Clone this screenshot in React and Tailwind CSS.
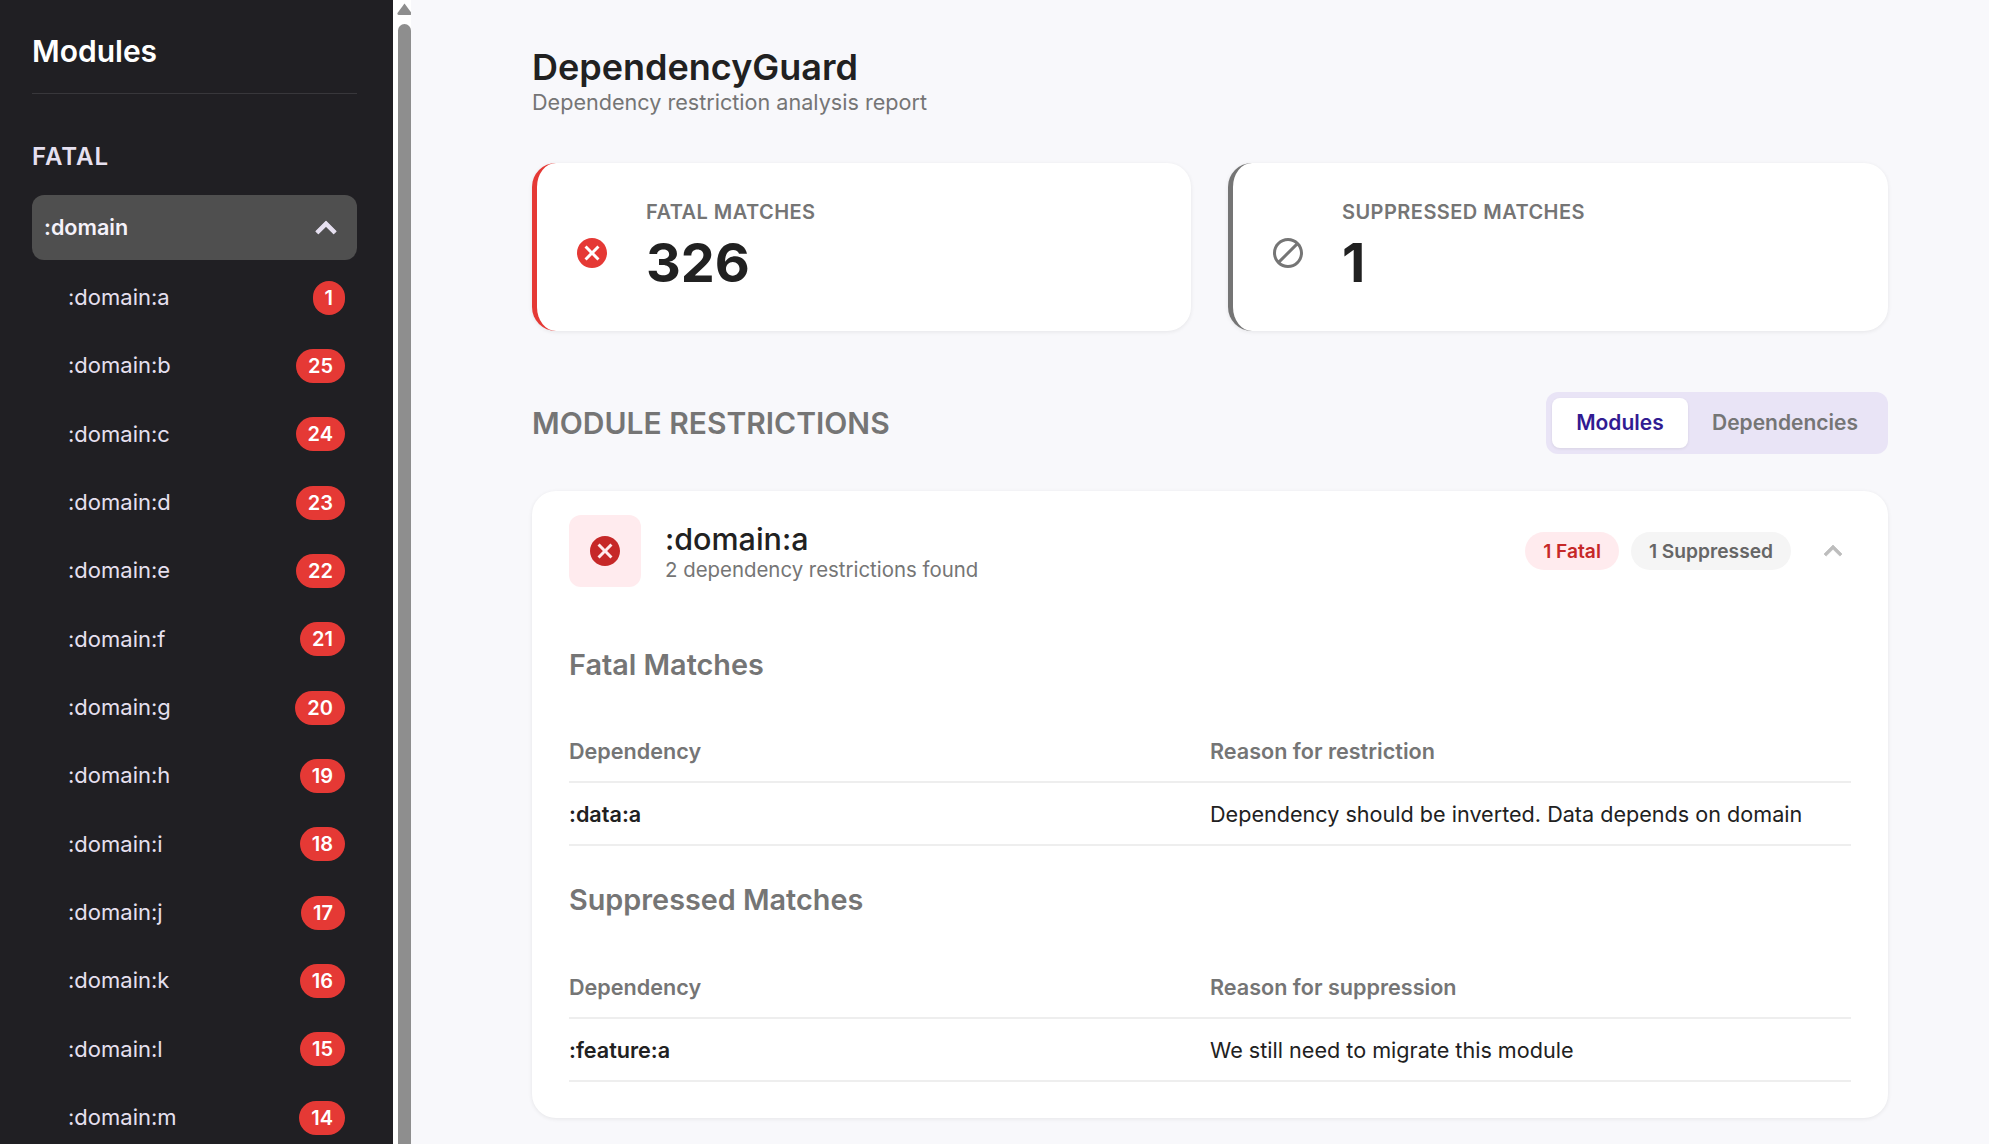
const cancel = "M12 2C6.47 2 2 6.47 2 12s4.47 10 10 10 10-4.47 10-10S17.53 2 12 2zm5 13.59L15.59 17 12 13.41 8.41 17 7 15.59 10.59 12 7 8.41 8.41 7 12 10.59 15.59 7 17 8.41 13.41 12 17 15.59z";
const block = "M12 2C6.48 2 2 6.48 2 12s4.48 10 10 10 10-4.48 10-10S17.52 2 12 2zM4 12c0-4.42 3.58-8 8-8 1.85 0 3.55.63 4.9 1.69L5.69 16.9C4.63 15.55 4 13.85 4 12zm8 8c-1.85 0-3.55-.63-4.9-1.69L18.31 7.1C19.37 8.45 20 10.15 20 12c0 4.42-3.58 8-8 8z";
const expandLess = "M12 8l-6 6 1.41 1.41L12 10.83l4.59 4.58L18 14z";

function Icon({ d, className, thick }) {
  return (
    <svg viewBox="0 0 24 24" className={className} fill="currentColor" stroke={thick ? "currentColor" : "none"} strokeWidth={thick || 0} strokeLinejoin="round">
      <path d={d} />
    </svg>
  );
}

const items = [
  ["a", 1], ["b", 25], ["c", 24], ["d", 23], ["e", 22], ["f", 21], ["g", 20],
  ["h", 19], ["i", 18], ["j", 17], ["k", 16], ["l", 15], ["m", 14],
];

function Sidebar() {
  return (
    <aside className="w-[393px] shrink-0 h-full overflow-hidden bg-[#201f23] pl-8 pr-9 pt-[32px]">
      <h2 className="text-[30px] leading-[38px] font-semibold text-white pb-[23px] border-b border-[#38373b]">Modules</h2>
      <h3 className="mt-[48px] text-[24px] leading-[30px] font-semibold text-[#e6e0f0] tracking-[1px]">FATAL</h3>
      <div className="mt-[23px] h-[65px] rounded-xl bg-[#4f4f4f] flex items-center justify-between pl-3 pr-[11px]">
        <span className="text-[21.6px] font-semibold text-[#f5f2fa]">:domain</span>
        <Icon d={expandLess} thick={0.7} className="w-[40px] h-[40px] text-[#e6e0f0]" />
      </div>
      <ul className="mt-[3.5px]">
        {items.map(([n, c]) => (
          <li key={n} className="h-[68.33px] flex items-center justify-between pl-9 pr-3">
            <span className="text-[22px] text-[#e6e0f0]">:domain:{n}</span>
            <span className="h-[34px] px-3 rounded-full bg-[#e53935] text-white text-[20px] font-semibold flex items-center">{c}</span>
          </li>
        ))}
      </ul>
    </aside>
  );
}

function Scrollbar() {
  return (
    <div className="w-[18px] shrink-0 h-full bg-white flex flex-col pl-[4px] pt-[3px] overflow-hidden">
      <svg viewBox="0 0 15 12" className="w-[15px] h-[12px] shrink-0 text-[#8e8e8e]" fill="currentColor">
        <path d="M7.5 0.5 L14.5 10 Q15 12 13 12 L2 12 Q0 12 0.5 10 Z" />
      </svg>
      <div className="mt-[9px] ml-[1px] w-[13px] flex-1 bg-[#8e8e8e] rounded-t-full" />
    </div>
  );
}

function Stat({ size, border, iconClass, d, label, value }) {
  return (
    <div className={`${size} h-[168px] bg-white rounded-3xl border-l-[5px] ${border} shadow-[0_1px_4px_rgba(0,0,0,0.08)] flex items-center pl-[37px] gap-9`}>
      <Icon d={d} className={`w-9 h-9 shrink-0 mt-[11px] ${iconClass}`} />
      <div className="pb-[2px]">
        <div className="text-[20px] leading-[28px] font-semibold tracking-[0.45px] text-[#757575]">{label}</div>
        <div className="mt-[6px] text-[54px] leading-[62px] font-bold text-[#212121]">{value}</div>
      </div>
    </div>
  );
}

function Table({ gap, reason, name, text }) {
  return (
    <div className={gap}>
      <div className="grid grid-cols-2 h-[62px] items-center border-b-2 border-[#eeeeee] text-[21.6px] font-semibold text-[#757575]">
        <div>Dependency</div>
        <div>{reason}</div>
      </div>
      <div className="grid grid-cols-2 h-[63px] items-center pt-[2px] border-b-2 border-[#eeeeee] text-[21.6px] text-[#212121]">
        <div className="font-semibold">{name}</div>
        <div>{text}</div>
      </div>
    </div>
  );
}

function Main() {
  return (
    <main className="flex-1 h-full overflow-hidden bg-[#f8f8fb] pl-[121px] pr-[101px] pt-[46px]">
      <h1 className="text-[36px] leading-[42px] font-semibold text-[#212121]">DependencyGuard</h1>
      <p className="text-[21.6px] leading-[28px] text-[#757575]">Dependency restriction analysis report</p>
      <div className="mt-[47px] flex gap-[37px]">
        <Stat size="w-[659px] shrink-0" border="border-[#e53935]" iconClass="text-[#e53935]" d={cancel} label="FATAL MATCHES" value="326" />
        <Stat size="flex-1" border="border-[#757575]" iconClass="text-[#757575]" d={block} label="SUPPRESSED MATCHES" value="1" />
      </div>
      <div className="mt-[61px] flex items-center justify-between">
        <h2 className="text-[30px] font-semibold text-[#757575]">MODULE RESTRICTIONS</h2>
        <div className="h-[62px] rounded-xl bg-[#e9e4f6] p-[6px] flex text-[21px] font-semibold">
          <div className="w-[136px] rounded-lg bg-white shadow-[0_1px_3px_rgba(0,0,0,0.08)] flex items-center justify-center text-[#311b92]">Modules</div>
          <div className="pl-[24px] pr-[24px] flex items-center text-[#757575]">Dependencies</div>
        </div>
      </div>
      <section className="mt-[37px] bg-white rounded-3xl shadow-[0_1px_4px_rgba(0,0,0,0.08)] px-[37px] pt-[24px] pb-[36px]">
        <div className="flex items-center">
          <div className="w-[72px] h-[72px] rounded-xl bg-[#ffebee] flex items-center justify-center">
            <Icon d={cancel} className="w-9 h-9 text-[#c62828]" />
          </div>
          <div className="ml-6 flex-1">
            <div className="text-[30.5px] leading-[37px] font-medium text-[#212121]">:domain:a</div>
            <div className="text-[20.4px] leading-[25px] text-[#757575]">2 dependency restrictions found</div>
          </div>
          <span className="h-[38px] px-[18px] rounded-full bg-[#ffebee] text-[#c62828] text-[19.2px] font-semibold flex items-center">1 Fatal</span>
          <span className="ml-3 h-[38px] px-[18px] rounded-full bg-[#f5f5f5] text-[#666666] text-[19.2px] font-semibold flex items-center">1 Suppressed</span>
          <Icon d={expandLess} thick={0.5} className="ml-6 w-9 h-9 text-[#bdbdbd]" />
        </div>
        <h3 className="mt-[58px] text-[28.8px] leading-[40px] font-semibold text-[#757575]">Fatal Matches</h3>
        <Table gap="mt-[36px]" reason="Reason for restriction" name=":data:a" text="Dependency should be inverted. Data depends on domain" />
        <h3 className="mt-[34px] text-[28.8px] leading-[40px] font-semibold text-[#757575]">Suppressed Matches</h3>
        <Table gap="mt-[37px]" reason="Reason for suppression" name=":feature:a" text="We still need to migrate this module" />
      </section>
    </main>
  );
}

export default function App() {
  return (
    <div className="flex h-screen overflow-hidden font-['Inter',sans-serif]">
      <Sidebar />
      <Scrollbar />
      <Main />
    </div>
  );
}
